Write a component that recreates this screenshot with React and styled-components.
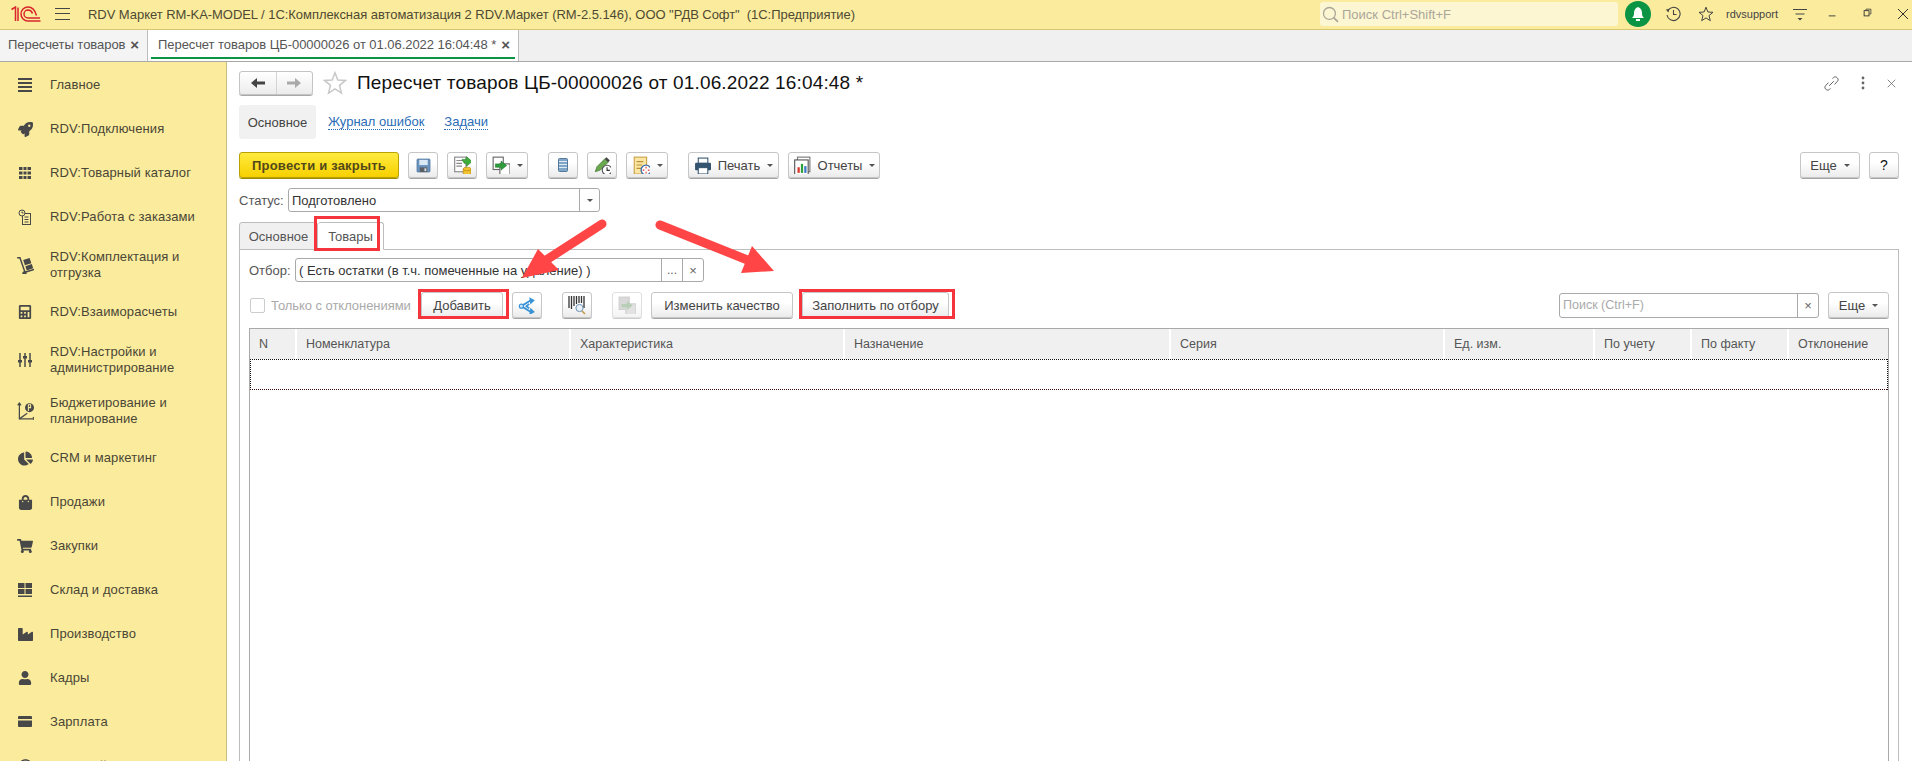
import React from 'react';
import styled, { createGlobalStyle, css } from 'styled-components';
import { FaRocket, FaCalculator, FaChartPie, FaShoppingBag, FaShoppingCart, FaIndustry, FaUser, FaRegUserCircle } from 'react-icons/fa';

const Global = createGlobalStyle`
  html, body { margin: 0; padding: 0; height: 100%; overflow: hidden; background: #fff; }
  body { font-family: "Liberation Sans", Arial, sans-serif; font-size: 13px; color: #4b4b4b; }
  *, *::before, *::after { box-sizing: border-box; }
`;

const Page = styled.div`
  position: relative; width: 1912px; height: 761px; overflow: hidden;
  display: flex; flex-direction: column;
`;
const TopBar = styled.header`
  height: 30px; flex: none; display: flex; align-items: center;
  background: #fbec9d; border-bottom: 1px solid #d6c76e; padding: 0 0 1px 11px;
`;
const Hamburger = styled.div`
  width: 15px; height: 12px; margin-left: 14px; flex: none;
  border-top: 1px solid #444; border-bottom: 1px solid #444; position: relative;
  &::after { content: ''; position: absolute; left: 0; right: 0; top: 4px; border-top: 1px solid #444; }
`;
const AppTitle = styled.div`
  margin-left: 18px; font-size: 13px; letter-spacing: -.05px; color: #4e4a32; white-space: pre; flex: 1;
`;
const GlobalSearch = styled.div`
  width: 298px; height: 24px; flex: none; background: #fdf6d2; border-radius: 3px; margin-right: 1px;
  display: flex; align-items: center; padding-left: 2px; gap: 3px; color: #aaa69a; font-size: 13px;
`;
const Bell = styled.div`
  width: 26px; height: 26px; border-radius: 50%; background: #0b9444; margin-left: 6px; flex: none;
  display: flex; align-items: center; justify-content: center;
`;
const TopIcon = styled.div`
  width: ${p => p.$w}px; margin-left: ${p => p.$ml}px; flex: none; display: flex; align-items: center; justify-content: center;
`;
const UserName = styled.div`
  margin-left: 12px; width: 53px; flex: none; font-size: 11px; color: #444;
`;
const TabStrip = styled.nav`
  height: 32px; flex: none; display: flex; background: #f0f0f0; border-bottom: 1px solid #a8a8a8;
`;
const DocTab = styled.div`
  width: ${p => p.$w}px; flex: none; height: 31px; display: flex; align-items: center; justify-content: space-between;
  padding: 0 ${p => p.$pr}px 3px 8px; background: ${p => p.$active ? '#fff' : '#f4f4f4'};
  border-right: 1px solid #bdbdbd; position: relative; font-size: 13px; color: #555; letter-spacing: -.05px;
  ${p => p.$active && css`
    &::after { content: ''; position: absolute; left: 3px; right: 3px; bottom: 2px; height: 2px; background: #0b9444; }
  `}
`;
const DocTabTitle = styled.span`
  margin-left: 2px;
`;
const TabClose = styled.span`
  font-size: 15px; font-weight: bold; color: #555; line-height: 1;
`;
const Main = styled.div`
  flex: 1; display: flex; min-height: 0;
`;
const Sidebar = styled.aside`
  width: 227px; flex: none; background: #fbec9d; border-right: 1px solid #c8bd80; overflow: hidden; padding-top: 1px;
`;
const SideItem = styled.div`
  height: ${p => p.$h || 44}px; display: flex; align-items: center; color: #4a4636; font-size: 13px; line-height: 16px; letter-spacing: .1px;
`;
const SideIcon = styled.div`
  width: 50px; flex: none; display: flex; justify-content: center; color: #484848;
`;
const SideLabel = styled.div`
  width: 170px;
`;
const Content = styled.main`
  flex: 1; min-width: 0; display: flex; flex-direction: column; padding: 9px 13px 0 12px;
`;
const HeaderRow = styled.div`
  height: 24px; flex: none; display: flex; align-items: center;
`;
const NavPair = styled.div`
  width: 74px; height: 24px; display: flex; flex: none; border: 1px solid #c4c4c4; border-radius: 3px;
  box-shadow: 0 1px 0 #a8a8a8; background: linear-gradient(#fff, #ececec);
`;
const NavCell = styled.div`
  flex: 1; display: flex; align-items: center; justify-content: center;
  & + & { border-left: 1px solid #d4d4d4; }
`;
const FavStar = styled.span`
  margin-left: 10px; flex: none;
`;
const Title = styled.h1`
  margin: 0 0 0 10px; font-size: 19px; font-weight: normal; color: #111; white-space: nowrap; flex: 1; letter-spacing: .15px;
`;
const WinActions = styled.div`
  display: flex; align-items: center; width: 72px; justify-content: space-between; margin-right: 3px; flex: none;
`;
const FormTabs = styled.div`
  height: 34px; margin-top: 10px; flex: none; display: flex; align-items: center;
`;
const FormTabActive = styled.div`
  width: 77px; height: 34px; background: #f1f1f1; border-radius: 3px; display: flex; align-items: center; justify-content: center; font-size: 13px; color: #444;
`;
const FormLink = styled.a`
  margin-left: ${p => p.$ml}px; font-size: 13px; color: #2a6cb5; border-bottom: 1px dotted #2a6cb5; line-height: 14px;
`;
const Toolbar = styled.div`
  height: 26px; margin-top: 13px; flex: none; display: flex; align-items: center; gap: 9px;
`;
const Btn = styled.button`
  position: relative; flex: none; width: ${p => p.$w}px; height: 26px; padding: 0; margin: 0;
  margin-left: ${p => p.$ml || 0}px;
  display: flex; align-items: center; justify-content: center; gap: 7px;
  font: ${p => p.$fs || 13}px "Liberation Sans", Arial, sans-serif; color: ${p => p.$fs ? '#111' : '#444'};
  background: linear-gradient(#fff, #fff 40%, #ebebeb); border: 1px solid #c6c6c6; border-radius: 3px;
  box-shadow: 0 1px 0 #a5a5a5;
  opacity: ${p => p.$off ? .55 : 1};
  ${p => p.$mark && css`
    &::after { content: ''; position: absolute; inset: -4px -7px -2px -4px; border: 3px solid #f6343c; }
  `}
`;
const PrimaryBtn = styled(Btn)`
  background: linear-gradient(#ffeb3f, #f7d000); border-color: #b8a100; box-shadow: 0 1px 0 #a08c00;
  font-weight: bold; font-size: 13px; color: #52491a; letter-spacing: .2px;
`;
const Caret = styled.span`
  width: 0; height: 0; border: 3.5px solid transparent; border-top: 3.5px solid #555; border-bottom: 0; flex: none;
`;
const Spacer = styled.div`flex: 1;`;
const FieldRow = styled.div`
  height: 24px; margin-top: ${p => p.$mt}px; flex: none; display: flex; align-items: center;
`;
const FieldLabel = styled.span`
  font-size: 13px; color: #555; flex: none; width: ${p => p.$w}px;
`;
const Field = styled.div`
  height: ${p => p.$h || 24}px; width: ${p => p.$w}px; flex: none; display: flex; align-items: stretch;
  border: 1px solid #a9a9a9; border-radius: 3px; background: #fff; font-size: 13px; color: #333;
`;
const FieldText = styled.div`
  flex: 1; display: flex; align-items: center; padding-left: 3px; color: ${p => p.$ph ? '#aaa' : '#333'}; white-space: nowrap; overflow: hidden;
  font-size: ${p => p.$ph ? 12.5 : 13}px;
`;
const FieldBtn = styled.div`
  width: ${p => p.$w}px; flex: none; border-left: 1px solid #a9a9a9; display: flex; align-items: center; justify-content: center; color: #666;
  font-size: ${p => p.$fs || 12}px;
`;
const PageTabs = styled.div`
  height: 28px; margin-top: 10px; flex: none; display: flex; position: relative; z-index: 1; margin-bottom: -1px;
`;
const PageTab = styled.div`
  width: ${p => p.$w}px; height: 28px; flex: none; display: flex; align-items: center; justify-content: center; position: relative;
  font-size: 13px; color: #555;
  border: 1px solid #bdbdbd; border-radius: 3px 3px 0 0;
  ${p => p.$active ? css`
    background: #fff; border-bottom-color: #fff; border-left: 0;
    &::after { content: ''; position: absolute; left: -4px; top: -7px; width: 66px; height: 35px; border: 3px solid #f6343c; }
  ` : css`background: #f0f0f0;`}
`;
const Panel = styled.section`
  flex: 1; min-height: 0; border: 1px solid #bdbdbd; border-bottom: 0; padding: 8px 9px 0; display: flex; flex-direction: column;
`;
const CommandRow = styled.div`
  height: 26px; margin-top: 10px; flex: none; display: flex; align-items: center;
`;
const Check = styled.span`
  width: 15px; height: 15px; border: 1px solid #ccc; border-radius: 2px; margin-left: 1px; flex: none;
`;
const CheckLabel = styled.span`
  margin-left: 6px; width: 150px; flex: none; font-size: 13px; color: #aaa; letter-spacing: -.05px; white-space: nowrap;
`;
const DataTable = styled.div`
  flex: 1; margin-top: 10px; border: 1px solid #a9a9a9; border-bottom: 0; min-height: 0;
`;
const HeadRow = styled.div`
  height: 30px; display: grid; grid-template-columns: 47px 274px 274px 326px 274px 150px 97px 97px 97px; background: #f0f0f0;
`;
const HeadCell = styled.div`
  display: flex; align-items: center; padding-left: 9px; font-size: 12.5px; color: #555;
  border-right: 2px solid #fff; &:last-child { border-right: 0; }
`;
const FocusRow = styled.div`
  height: 31px;
  background:
    repeating-linear-gradient(90deg, #111 0 1px, transparent 1px 2px) top / 100% 1px no-repeat,
    repeating-linear-gradient(90deg, #3a0808 0 1px, transparent 1px 2px) bottom / 100% 1px no-repeat,
    repeating-linear-gradient(0deg, #111 0 1px, transparent 1px 2px) left / 1px 100% no-repeat,
    repeating-linear-gradient(0deg, #111 0 1px, transparent 1px 2px) right / 1px 100% no-repeat;
`;
const ArrowLayer = styled.svg`
  position: absolute; left: 0; top: 0; pointer-events: none; z-index: 5;
`;

const Ic = ({ s = 16, w, h, vb = '0 0 16 16', children }) => (
  <svg width={w || s} height={h || s} viewBox={vb} style={{ display: 'block' }}>{children}</svg>
);

const Logo = () => (
  <Ic w={30} h={16} vb="0 0 30 16">
    <g fill="none" stroke="#d9262b" strokeWidth="1.5">
      <path d="M0.5 3.5 L4.5 1 V15 M7 1.5 V15" />
      <path d="M17 1 A7 7 0 0 0 10 8 A7 7 0 0 0 17 15 H29.5" />
      <path d="M21.5 7.5 A5 5 0 0 0 17 4 A4 4 0 0 0 13 8 A4 4 0 0 0 17 12 H29" />
      <path d="M17 1 C21 1 24 4 25.5 9.5" />
    </g>
  </Ic>
);
const SearchGlyph = () => (
  <Ic s={17}>
    <circle cx="7" cy="7" r="5.6" fill="none" stroke="#a9a698" strokeWidth="1.2" />
    <path d="M11 11 L15 15" stroke="#a9a698" strokeWidth="1.6" />
  </Ic>
);
const BellGlyph = () => (
  <Ic s={16}>
    <path d="M8 1 C5 2 4 4.5 4 7 C4 9.5 3.4 10.5 2 12 H14 C12.6 10.5 12 9.5 12 7 C12 4.5 11 2 8 1Z" fill="#fff" />
    <rect x="6" y="13" width="4" height="2" fill="#fff" />
  </Ic>
);
const HistoryGlyph = () => (
  <Ic s={16}>
    <path d="M2.6 5 A6.6 6.6 0 1 1 2 9" fill="none" stroke="#444" strokeWidth="1.1" />
    <path d="M0.8 3.4 L4.5 3 L3.4 6.5Z" fill="#444" />
    <path d="M8.5 4 V8.5 H11.5" fill="none" stroke="#444" strokeWidth="1.1" />
  </Ic>
);
const StarGlyph = ({ s = 16, c = '#444' }) => (
  <Ic s={s}>
    <path d="M8 1.2 L9.9 6 L15 6.3 L11 9.6 L12.3 14.7 L8 11.9 L3.7 14.7 L5 9.6 L1 6.3 L6.1 6Z" fill="none" stroke={c} strokeWidth="1" />
  </Ic>
);
const MenuGlyph = () => (
  <Ic s={16}>
    <path d="M1 3.5 H15 M3.5 8 H12.5" stroke="#444" strokeWidth="1" />
    <path d="M5.5 12 H10.5 L8 14.5Z" fill="#444" />
  </Ic>
);
const LineMin = () => <Ic s={12}><path d="M1 10.5 H10" stroke="#333" strokeWidth="1.2" /></Ic>;
const Restore = () => (
  <Ic s={12}>
    <rect x="1.5" y="3.5" width="6.5" height="7" fill="none" stroke="#333" strokeWidth="1.2" />
    <path d="M4 3 V1.5 H10.5 V8 H8.5" fill="none" stroke="#333" strokeWidth="1" />
  </Ic>
);
const CloseX = ({ s = 12, c = '#333' }) => <Ic s={s} vb="0 0 12 12"><path d="M1 1 L11 11 M11 1 L1 11" stroke={c} strokeWidth="1" /></Ic>;
const LinkGlyph = () => (
  <Ic s={15}>
    <path d="M9 2.8 L10.3 1.6 C11.5 .6 13 .8 14.2 2 C15.3 3.2 15.3 4.6 14.2 5.8 L11.2 9" fill="none" stroke="#555" strokeWidth="1" />
    <path d="M7 13.2 L5.7 14.4 C4.5 15.4 3 15.2 1.8 14 C.7 12.8 .7 11.4 1.8 10.2 L4.8 7" fill="none" stroke="#555" strokeWidth="1" />
    <path d="M5.5 10.5 L10.5 5.5" stroke="#555" strokeWidth="1" />
  </Ic>
);
const Dots = () => (
  <Ic w={4} h={14} vb="0 0 4 14"><circle cx="2" cy="2" r="1.4" fill="#666" /><circle cx="2" cy="7" r="1.4" fill="#666" /><circle cx="2" cy="12" r="1.4" fill="#666" /></Ic>
);
const BackArrow = ({ c, flip }) => (
  <Ic w={14} h={10} vb="0 0 14 10">
    <path d={flip ? 'M14 5 L8 0 V3.5 H0 V6.5 H8 V10Z' : 'M0 5 L6 0 V3.5 H14 V6.5 H6 V10Z'} fill={c} />
  </Ic>
);

const SaveI = () => (
  <Ic s={15}>
    <rect x="1" y="1" width="14" height="14" rx="1" fill="#6b93bd" stroke="#3f6a96" strokeWidth=".6" />
    <rect x="3.5" y="2" width="9" height="5.5" fill="#dbe9f5" />
    <rect x="4" y="10" width="8" height="5" fill="#5a5f66" />
    <rect x="9" y="11" width="2" height="3" fill="#ddd" />
  </Ic>
);
const PostI = () => (
  <Ic s={18}>
    <rect x="1.5" y="1" width="10" height="13" fill="#fff" stroke="#888" />
    <path d="M3 4 H9 M3 6.5 H8 M3 9 H8" stroke="#888" />
    <path d="M8 3 H12 V0.5 L17 5 L12 9 V6.5 H10 Z" fill="#3fae3a" stroke="#1f7a1f" strokeWidth=".5" />
    <path d="M9 11.5 V15.5 C9 17 16 17 16 15.5 V11.5" fill="#f2c230" stroke="#a57a00" strokeWidth=".5" />
    <ellipse cx="12.5" cy="11.5" rx="3.5" ry="1.6" fill="#f2c230" stroke="#a57a00" strokeWidth=".5" />
  </Ic>
);
const RelI = ({ faded }) => (
  <Ic s={18}>
    <rect x="1" y="1" width="9" height="11" fill={faded ? '#bbb' : '#fff'} stroke={faded ? '#aaa' : '#666'} />
    <rect x="7" y="7" width="9" height="10" fill={faded ? '#ccc' : '#fff'} stroke={faded ? '#aaa' : '#666'} />
    <path d="M3 7 H8 V4.5 L13 8.5 L8 12.5 V10 H3Z" fill={faded ? '#7ea87e' : '#2e9e3c'} stroke={faded ? 'none' : '#1c6e28'} strokeWidth=".5" />
  </Ic>
);
const ListI = () => (
  <Ic w={10} h={14} vb="0 0 10 14">
    <rect x=".5" y=".5" width="9" height="13" rx="1" fill="#7fa6c8" stroke="#55799a" />
    <path d="M1 3.5 H9 M1 6.5 H9 M1 9.5 H9" stroke="#dfeaf3" strokeWidth="1" />
  </Ic>
);
const PenClockI = () => (
  <Ic s={18}>
    <path d="M2 14 L3.5 9.5 L10.5 2.5 L13.5 5.5 L6.5 12.5Z" fill="#6aa84f" stroke="#3e6e2c" strokeWidth=".6" />
    <path d="M10.5 2.5 L12 1 L15 4 L13.5 5.5Z" fill="#444" />
    <circle cx="12.5" cy="12.5" r="4.3" fill="#fff" stroke="#555" />
    <path d="M12.5 10 V12.8 H15" fill="none" stroke="#333" />
  </Ic>
);
const DocClockI = () => (
  <Ic s={18}>
    <rect x="2" y="1" width="11" height="15" fill="#fbe7a3" stroke="#c9a24a" />
    <path d="M4 5 H10 M4 8 H9 M4 11 H8" stroke="#b98f3a" />
    <circle cx="12.5" cy="12.5" r="4.4" fill="#fff" stroke="#3b6fb0" strokeWidth="1.2" />
    <path d="M12.5 9.5 V11 M12.5 14 V15.5 M9.5 12.5 H11 M14 12.5 H15.5" stroke="#d9362b" />
  </Ic>
);
const PrintI = () => (
  <Ic s={17}>
    <rect x="4" y="1" width="9" height="5" fill="#fff" stroke="#33536f" />
    <rect x="1" y="5.5" width="15" height="7" rx="1" fill="#33536f" />
    <rect x="4" y="10" width="9" height="6" fill="#fff" stroke="#33536f" />
  </Ic>
);
const ReportI = () => (
  <Ic s={18}>
    <rect x="4" y="1" width="11" height="13" fill="#fff" stroke="#777" />
    <rect x="1.5" y="3.5" width="12" height="13.5" fill="#fff" stroke="#555" />
    <rect x="4" y="10" width="2" height="5" fill="#d9362b" />
    <rect x="7" y="7" width="2" height="8" fill="#2e9e3c" />
    <rect x="10" y="9" width="2" height="6" fill="#3b78c4" />
  </Ic>
);
const BranchI = () => (
  <Ic s={18}>
    <path d="M3 9 L11 4 M3 9 L11 14 M10 7 L7.5 9 L10 11" fill="none" stroke="#3a93d6" strokeWidth="1.6" />
    <circle cx="3" cy="9" r="1.8" fill="#cfe6f7" stroke="#3a93d6" />
    <path d="M10 1 L15 3.8 L11 7.5Z M11 10.5 L15 14.2 L10 17Z" fill="#3a93d6" />
  </Ic>
);
const BarcodeI = () => (
  <Ic s={20} vb="0 0 20 20">
    <path d="M2 1 V13 M4.5 1 V14 M7 1 V11 M9.5 1 V9 M12 1 V8 M14.5 1 V8 M17 1 V13" stroke="#333" strokeWidth="1.3" />
    <circle cx="12.5" cy="13" r="3.6" fill="#e7f2fb" stroke="#6e90ad" strokeWidth="1" />
    <path d="M15 16 L18 19" stroke="#c79a4a" strokeWidth="1.6" />
  </Ic>
);
const GridI = () => (
  <Ic s={16}>
    <path d="M2 2 H14 V5 H2Z M2 6.5 H14 V9.5 H2Z M2 11 H14 V14 H2Z" fill="#484848" />
    <path d="M6 2 V14 M10 2 V14" stroke="#fbec9d" strokeWidth="1" />
  </Ic>
);
const OrdersI = () => (
  <Ic s={16}>
    <rect x="5.5" y="4.5" width="8" height="11" fill="none" stroke="#484848" />
    <path d="M7.5 8 H11.5 M7.5 10.5 H11.5 M7.5 13 H11.5" stroke="#484848" />
    <circle cx="5" cy="4" r="3" fill="#fbec9d" stroke="#484848" />
    <path d="M5 2.5 V4 H6.5" fill="none" stroke="#484848" />
  </Ic>
);
const BarsI = () => (
  <Ic s={16}>
    <path d="M1 2 H15 M1 6 H15 M1 10 H15 M1 14 H15" stroke="#484848" strokeWidth="2" />
  </Ic>
);
const TrolleyI = () => (
  <Ic s={18}>
    <path d="M1 1.5 H3.5 L8 14.5 L16 12" fill="none" stroke="#484848" strokeWidth="1.3" />
    <circle cx="7.5" cy="15.5" r="2" fill="#484848" />
    <rect x="7" y="2.5" width="6" height="5" transform="rotate(-18 10 5)" fill="#484848" />
    <rect x="8.8" y="8" width="6" height="4" transform="rotate(-18 11.8 10)" fill="#484848" />
  </Ic>
);
const SlidersI = () => (
  <Ic s={16}>
    <path d="M3 1 V15 M8 1 V15 M13 1 V15" stroke="#484848" strokeWidth="1.5" />
    <rect x="1" y="8" width="4" height="2.5" fill="#484848" />
    <rect x="6" y="4" width="4" height="2.5" fill="#484848" />
    <rect x="11" y="8" width="4" height="2.5" fill="#484848" />
  </Ic>
);
const BudgetI = () => (
  <Ic s={18}>
    <path d="M3 1 V15 H17" fill="none" stroke="#484848" strokeWidth="1.1" />
    <path d="M1.5 3 L3 1 L4.5 3 M15 13.5 L17 15 L15 16.5 M3 15 L10 10" fill="none" stroke="#484848" strokeWidth="1.1" />
    <circle cx="12" cy="5" r="4" fill="#484848" />
    <path d="M11 8 V2.5 H13 V5 H11" fill="none" stroke="#fbec9d" strokeWidth=".9" />
  </Ic>
);
const StoreI = () => (
  <Ic s={16}>
    <path d="M1 1 H7.5 V6 H1Z M8.5 1 H15 V6 H8.5Z M1 7 H7.5 V12 H1Z M8.5 7 H15 V12 H8.5Z M1 13.5 H15 V15 H1Z" fill="#484848" />
  </Ic>
);
const WalletI = () => (
  <Ic s={16}>
    <rect x="1" y="2" width="14" height="11" rx="1" fill="#484848" />
    <rect x="1" y="5" width="14" height="1.5" fill="#fbec9d" />
  </Ic>
);

const sideItems = [
  ['Главное', <BarsI />, 44],
  ['RDV:Подключения', <FaRocket size={15} />, 44],
  ['RDV:Товарный каталог', <GridI />, 44],
  ['RDV:Работа с заказами', <OrdersI />, 44],
  ['RDV:Комплектация и отгрузка', <TrolleyI />, 51],
  ['RDV:Взаиморасчеты', <FaCalculator size={14} />, 44],
  ['RDV:Настройки и администрирование', <SlidersI />, 52],
  ['Бюджетирование и планирование', <BudgetI />, 50],
  ['CRM и маркетинг', <FaChartPie size={15} />, 44],
  ['Продажи', <FaShoppingBag size={15} />, 44],
  ['Закупки', <FaShoppingCart size={16} />, 44],
  ['Склад и доставка', <StoreI />, 44],
  ['Производство', <FaIndustry size={15} />, 44],
  ['Кадры', <FaUser size={14} />, 44],
  ['Зарплата', <WalletI />, 44],
  ['Казначейство', <FaRegUserCircle size={15} />, 44],
];

const cols = ['N', 'Номенклатура', 'Характеристика', 'Назначение', 'Серия', 'Ед. изм.', 'По учету', 'По факту', 'Отклонение'];

export default function App() {
  return (
    <Page>
      <Global />
      <TopBar>
        <Logo />
        <Hamburger />
        <AppTitle>{'RDV Маркет RM-KA-MODEL / 1С:Комплексная автоматизация 2 RDV.Маркет (RM-2.5.146), ООО "РДВ Софт"  (1С:Предприятие)'}</AppTitle>
        <GlobalSearch><SearchGlyph />Поиск Ctrl+Shift+F</GlobalSearch>
        <Bell><BellGlyph /></Bell>
        <TopIcon $w={16} $ml={14}><HistoryGlyph /></TopIcon>
        <TopIcon $w={16} $ml={17}><StarGlyph /></TopIcon>
        <UserName>rdvsupport</UserName>
        <TopIcon $w={16} $ml={13}><MenuGlyph /></TopIcon>
        <TopIcon $w={12} $ml={20}><LineMin /></TopIcon>
        <TopIcon $w={12} $ml={23}><Restore /></TopIcon>
        <TopIcon $w={12} $ml={22}><CloseX /></TopIcon>
        <TopIcon $w={3} $ml={0} />
      </TopBar>
      <TabStrip>
        <DocTab $w={148} $pr={8}>Пересчеты товаров <TabClose>×</TabClose></DocTab>
        <DocTab $w={371} $active $pr={8}>
          <DocTabTitle>Пересчет товаров ЦБ-00000026 от 01.06.2022 16:04:48 *</DocTabTitle> <TabClose>×</TabClose>
        </DocTab>
      </TabStrip>
      <Main>
        <Sidebar>
          {sideItems.map(([label, icon, h]) => (
            <SideItem key={label} $h={h}><SideIcon>{icon}</SideIcon><SideLabel>{label}</SideLabel></SideItem>
          ))}
        </Sidebar>
        <Content>
          <HeaderRow>
            <NavPair>
              <NavCell><BackArrow c="#444" /></NavCell>
              <NavCell><BackArrow c="#aaa" flip /></NavCell>
            </NavPair>
            <FavStar><StarGlyph s={24} c="#c8c8c8" /></FavStar>
            <Title>Пересчет товаров ЦБ-00000026 от 01.06.2022 16:04:48 *</Title>
            <WinActions><LinkGlyph /><Dots /><CloseX s={9} c="#666" /></WinActions>
          </HeaderRow>
          <FormTabs>
            <FormTabActive>Основное</FormTabActive>
            <FormLink $ml={12}>Журнал ошибок</FormLink>
            <FormLink $ml={20}>Задачи</FormLink>
          </FormTabs>
          <Toolbar>
            <PrimaryBtn $w={160}>Провести и закрыть</PrimaryBtn>
            <Btn $w={30}><SaveI /></Btn>
            <Btn $w={30}><PostI /></Btn>
            <Btn $w={42}><RelI /><Caret /></Btn>
            <Btn $w={30} $ml={11}><ListI /></Btn>
            <Btn $w={30}><PenClockI /></Btn>
            <Btn $w={42}><DocClockI /><Caret /></Btn>
            <Btn $w={91} $ml={11}><PrintI />Печать<Caret /></Btn>
            <Btn $w={92}><ReportI />Отчеты<Caret /></Btn>
            <Spacer />
            <Btn $w={60}>Еще<Caret /></Btn>
            <Btn $w={30} $fs={14}>?</Btn>
          </Toolbar>
          <FieldRow $mt={10}>
            <FieldLabel $w={49}>Статус:</FieldLabel>
            <Field $w={312}>
              <FieldText>Подготовлено</FieldText>
              <FieldBtn $w={20}><Caret /></FieldBtn>
            </Field>
          </FieldRow>
          <PageTabs>
            <PageTab $w={79}>Основное</PageTab>
            <PageTab $w={66} $active>Товары</PageTab>
          </PageTabs>
          <Panel>
            <FieldRow $mt={0}>
              <FieldLabel $w={46}>Отбор:</FieldLabel>
              <Field $w={409}>
                <FieldText>( Есть остатки (в т.ч. помеченные на удаление) )</FieldText>
                <FieldBtn $w={21}>...</FieldBtn>
                <FieldBtn $w={21} $fs={13}>×</FieldBtn>
              </Field>
            </FieldRow>
            <CommandRow>
              <Check />
              <CheckLabel>Только с отклонениями</CheckLabel>
              <Btn $w={82} $mark>Добавить</Btn>
              <Btn $w={30} $ml={9}><BranchI /></Btn>
              <Btn $w={30} $ml={20}><BarcodeI /></Btn>
              <Btn $w={30} $ml={20} $off><RelI faded /></Btn>
              <Btn $w={142} $ml={9}>Изменить качество</Btn>
              <Btn $w={147} $ml={9} $mark>Заполнить по отбору</Btn>
              <Spacer />
              <Field $w={260} $h={25}>
                <FieldText $ph>Поиск (Ctrl+F)</FieldText>
                <FieldBtn $w={21} $fs={13}>×</FieldBtn>
              </Field>
              <Btn $w={61} $ml={9}>Еще<Caret /></Btn>
            </CommandRow>
            <DataTable>
              <HeadRow>{cols.map(c => <HeadCell key={c}>{c}</HeadCell>)}</HeadRow>
              <FocusRow />
            </DataTable>
          </Panel>
        </Content>
      </Main>
      <ArrowLayer width="1912" height="761" viewBox="0 0 1912 761">
        <g fill="#ff4545" stroke="#ff4545" strokeLinecap="round">
          <line x1="602" y1="224" x2="540" y2="264" strokeWidth="9" />
          <path d="M522 278 L538 249 L559 270Z" stroke="none" />
          <line x1="660" y1="225" x2="750" y2="261" strokeWidth="9" />
          <path d="M774 271 L752 246 L741 273Z" stroke="none" />
        </g>
      </ArrowLayer>
    </Page>
  );
}
